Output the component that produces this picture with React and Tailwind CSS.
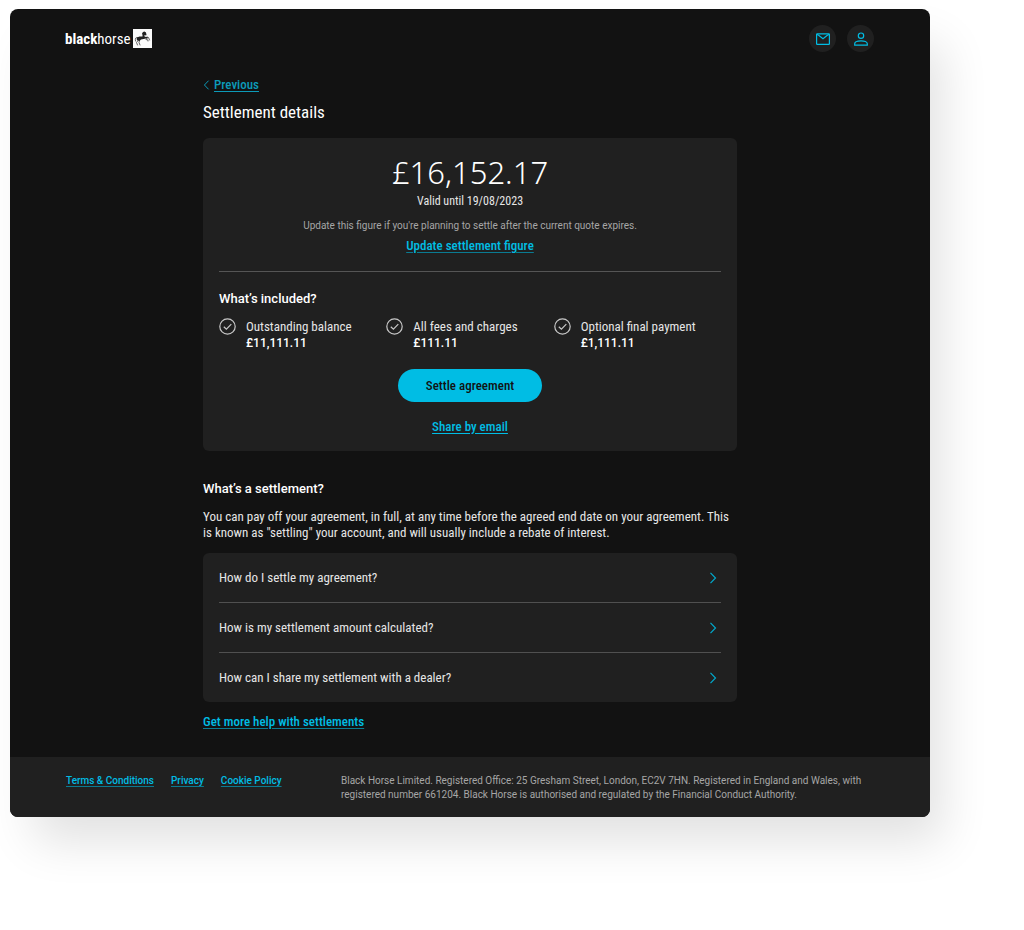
import React from 'react';

const included = [
  { label: 'Outstanding balance', amount: '£11,111.11' },
  { label: 'All fees and charges', amount: '£111.11' },
  { label: 'Optional final payment', amount: '£1,111.11' },
];

const questions = [
  'How do I settle my agreement?',
  'How is my settlement amount calculated?',
  'How can I share my settlement with a dealer?',
];

const footerLinks = ['Terms & Conditions', 'Privacy', 'Cookie Policy'];

function Logo() {
  return (
    <a href="#home" className="flex items-center gap-0.5">
      <span className="text-[15px] leading-5 text-white">
        <b>black</b>horse
      </span>
      <svg viewBox="0 0 38 38" className="size-[19px] bg-[#fafafa]" aria-hidden="true">
        <path
          fill="none"
          stroke="#333"
          strokeLinecap="round"
          strokeLinejoin="round"
          strokeWidth="1.5"
          d="M9 17C5 16 4 19 5 24M10 23l-3 4 2 5M13 23l-1 4 2 5M27 19l4-2 2 5M26 21l4 1 0 2"
        />
        <path
          fill="#222"
          d="M8 17l5-2 6 0 0-3-1-3 2-3 3-1 3 2 1 5-1 1-3-1 0 3 3 1 3-1 1 2-4 2-5 1-5 1-3 3-4-1-2-3z"
        />
      </svg>
    </a>
  );
}

function CheckCircle() {
  return (
    <svg viewBox="0 0 17 17" className="size-[17px] shrink-0" fill="none" stroke="#c8c8c8" strokeWidth="1.2" aria-hidden="true">
      <circle cx="8.5" cy="8.5" r="7.7" />
      <path d="M4.8 8.7l2.6 2.5 4.9-5" />
    </svg>
  );
}

function Chevron({ className }) {
  return (
    <svg viewBox="0 0 8 12" className={className} fill="none" stroke="currentColor" strokeWidth="1.2" aria-hidden="true">
      <path d="M1.5 0.8l5 5.2-5 5.2" />
    </svg>
  );
}

function App() {
  return (
    <div className="bg-white pt-[9px] pr-[94px] pb-28 pl-[10px] font-['Roboto_Condensed','Roboto',sans-serif] text-[13px] leading-4 text-[#e6e6e6]">
      <div className="overflow-hidden rounded-lg bg-[#121212] shadow-[18px_30px_48px_-6px_rgba(0,0,0,0.12)]">
        <header className="flex items-center justify-between pt-4 pr-14 pl-[55px]">
          <Logo />
          <div className="flex gap-[11px]">
            <button type="button" aria-label="Messages" className="flex size-[27px] items-center justify-center rounded-full bg-[#202020] text-[#00bde4]">
              <svg viewBox="0 0 14 12" className="h-3 w-3.5" fill="none" stroke="currentColor" strokeWidth="1.2">
                <rect x="0.6" y="0.9" width="12.8" height="10.4" rx="0.6" />
                <path d="M1 1.5l1.6 0.8L7 5.8l4.4-3.5L13 1.5" />
              </svg>
            </button>
            <button type="button" aria-label="Profile" className="flex size-[27px] items-center justify-center rounded-full bg-[#202020] text-[#00bde4]">
              <svg viewBox="0 0 14 14" className="size-3.5" fill="none" stroke="currentColor" strokeWidth="1.2">
                <circle cx="7" cy="3.7" r="2.7" />
                <path d="M0.7 13.1v-1.4C0.7 9.8 3.6 8.8 7 8.8s6.3 1 6.3 2.9v1.4z" />
              </svg>
            </button>
          </div>
        </header>

        <main className="mx-auto max-w-[534px] pt-[25px] pb-[27px]">
          <a href="#previous" className="flex w-fit items-center gap-1 font-medium text-[#0c9ab8]">
            <Chevron className="h-2.5 w-[7px] rotate-180" />
            <span className="underline underline-offset-2">Previous</span>
          </a>
          <h1 className="mt-[7px] text-[17px] leading-6 text-white">Settlement details</h1>

          <section className="mt-3.5 rounded-md bg-[#202020] px-4 pt-3.5 pb-4">
            <div className="text-center">
              <p className="font-['Noto_Sans',sans-serif] text-[31px] leading-10 font-light text-white">£16,152.17</p>
              <p className="mt-px text-[12px]">Valid until 19/08/2023</p>
              <p className="mt-2 font-['Roboto',sans-serif] text-[10px] leading-[17px] text-[#a6a6a6]">
                Update this figure if you're planning to settle after the current quote expires.
              </p>
              <a href="#update" className="mt-1 inline-block align-top font-medium text-[#00bde4] underline decoration-[#0a7b92] underline-offset-2">
                Update settlement figure
              </a>
            </div>
            <hr className="mt-[17px] border-[#555]" />
            <h2 className="mt-[17px] font-['Roboto',sans-serif] text-[13px] leading-5 font-medium text-white">What’s included?</h2>
            <ul className="mt-[9px] grid grid-cols-3">
              {included.map((item) => (
                <li key={item.label} className="flex gap-2.5">
                  <CheckCircle />
                  <div className="leading-[17px]">
                    <p>{item.label}</p>
                    <p className="font-['Roboto',sans-serif] text-[12px] font-medium text-white">{item.amount}</p>
                  </div>
                </li>
              ))}
            </ul>
            <div className="mt-[17px] flex flex-col items-center gap-[17px]">
              <button type="button" className="h-[33px] rounded-full bg-[#00bde4] px-7 font-medium text-[#121212]">
                Settle agreement
              </button>
              <a href="#share" className="font-medium text-[#00bde4] underline underline-offset-2">Share by email</a>
            </div>
          </section>

          <h2 className="mt-7 font-['Roboto',sans-serif] text-[13px] leading-5 font-medium text-white">What’s a settlement?</h2>
          <p className="mt-2.5">
            You can pay off your agreement, in full, at any time before the agreed end date on your agreement. This
            is known as "settling" your account, and will usually include a rebate of interest.
          </p>

          <ul className="mt-3 divide-y divide-[#505050] rounded-md bg-[#202020] px-4">
            {questions.map((question) => (
              <li key={question}>
                <button type="button" className="flex h-[49px] w-full items-center justify-between pr-1 text-left">
                  {question}
                  <Chevron className="h-3 w-2 text-[#00a9cc]" />
                </button>
              </li>
            ))}
          </ul>
          <a href="#help" className="mt-3 block w-fit font-medium text-[#00bde4] underline decoration-[#0a7b92] underline-offset-2">
            Get more help with settlements
          </a>
        </main>

        <footer className="flex bg-[#202020] px-14 pt-[17px] pb-[15px] font-['Roboto',sans-serif] text-[10px] leading-3.5">
          <nav className="flex w-[275px] shrink-0 gap-[17px]">
            {footerLinks.map((link) => (
              <a key={link} href="#footer" className="font-medium text-[#00bde4] underline decoration-[#0a7b92] underline-offset-2">
                {link}
              </a>
            ))}
          </nav>
          <p className="text-[#a6a6a6]">
            Black Horse Limited. Registered Office: 25 Gresham Street, London, EC2V 7HN. Registered in England and Wales, with
            registered number 661204. Black Horse is authorised and regulated by the Financial Conduct Authority.
          </p>
        </footer>
      </div>
    </div>
  );
}

export default App;
